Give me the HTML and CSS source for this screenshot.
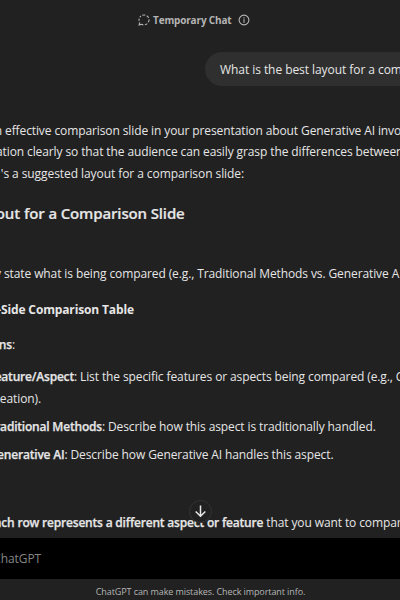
FILE: index.html
```
<!DOCTYPE html>
<html lang="en">
<head>
<meta charset="utf-8">
<title>Temporary Chat</title>
<link rel="stylesheet" href="styles.css">
</head>
<body>
<div class="app">
  <header class="topbar">
    <svg class="dashed" viewBox="0 0 12 12"><path d="M4.3 1.3A5 5 0 0 1 7.2 1.1M8.7 1.7A5 5 0 0 1 10.6 3.9M11 5.4A5 5 0 0 1 10.4 8.3M9.3 9.6A5 5 0 0 1 6.9 10.8M5.3 10.9Q4.3 10.7 3.6 10.3L1.1 10.9L1.7 8.3M1.1 6.9A5 5 0 0 1 1.2 4.6M1.8 3.3A5 5 0 0 1 3 2"/></svg>
    <span class="title">Temporary Chat</span>
    <svg class="info" viewBox="0 0 12 12"><circle cx="6" cy="6" r="4.9"/><path d="M6 5.2V8.7M6 3.2V4.4"/></svg>
  </header>
  <main class="thread">
    <div class="bubble">What is the best layout for a com</div>
    <div class="answer">
      <p class="line first"><span class="cut w5">n</span><span>effective comparison slide in your presentation about Generative AI invo</span></p>
      <p class="line"><span class="cut w27">ation</span><span>clearly so that the audience can easily grasp the differences between</span></p>
      <p class="line"><span class="cut w12">'s</span><span class="loose">a suggested layout for a comparison slide:</span></p>
      <h3 class="line"><span class="cut w24">out</span><span>for a Comparison Slide</span></h3>
      <p class="line state"><span class="cut w4">y</span><span>state what is being compared (e.g., Traditional Methods vs. Generative A</span></p>
      <h4 class="line"><span class="cut w1 tight">-</span><span>Side Comparison Table</span></h4>
      <p class="line columns"><span class="cut w15 tight"><span><b>ns</b>:</span></span></p>
      <ul>
        <li class="line"><span class="cut w80"><span><b>eature/Aspect</b>:</span></span><span>List the specific features or aspects being compared (e.g., C</span></li>
        <li class="line"><span class="cut w41 tight">eation).</span></li>
        <li class="line gap"><span class="cut w108"><span><b>raditional Methods</b>:</span></span><span>Describe how this aspect is traditionally handled.</span></li>
        <li class="line gap"><span class="cut w71"><span><b>enerative AI</b>:</span></span><span>Describe how Generative AI handles this aspect.</span></li>
      </ul>
      <p class="line rows"><span class="cut w17"><b>ach</b></span><span><b>row represents a different aspect or feature</b> that you want to compar</span></p>
    </div>
    <div class="scroll"><svg viewBox="0 0 24 24"><path d="M12 5V17.3M6.5 12L12 17.5L17.5 12"/></svg></div>
  </main>
  <div class="composer"><span class="cut w41 tight">ChatGPT</span></div>
  <footer>ChatGPT can make mistakes. Check important info.</footer>
</div>
</body>
</html>
```
FILE: styles.css
```
* { box-sizing: border-box; margin: 0; padding: 0; }
body { background: #212121; color: #e6e6e6; font: 12px/22px "Open Sans", "Noto Sans", sans-serif; letter-spacing: -0.105px; overflow: hidden; }
.app { width: 400px; height: 600px; overflow: hidden; display: flex; flex-direction: column; }
.topbar { height: 40px; display: flex; align-items: center; padding-left: 138px; color: #b4b4b4; flex: none; }
.topbar svg { width: 12px; height: 12px; fill: none; stroke: #b4b4b4; stroke-width: 1.1; }
.title { font-size: 10px; font-weight: 700; letter-spacing: -0.16px; margin: 0 6px 0 3px; width: 79px; white-space: nowrap; }
.thread { height: 498px; flex: none; position: relative; overflow: hidden; padding-top: 12px; }
.bubble { margin-left: 205px; width: 300px; height: 34px; border-radius: 17px; background: #2f2f2f; padding: 7px 15px; white-space: nowrap; letter-spacing: -0.06px; }
.answer { padding-top: 34px; }
.line { display: flex; white-space: nowrap; height: 22px; font-size: 12px; font-weight: 400; }
.first { height: 21px; }
.loose { letter-spacing: -0.07px; }
.cut { display: flex; justify-content: flex-end; flex: none; padding-right: 3px; }
.tight { padding-right: 0; }
b { font-weight: 600; letter-spacing: -0.2px; -webkit-text-stroke: 0.25px currentColor; }
.w1 { width: 1px; }
.w4 { width: 4px; }
.w5 { width: 5px; }
.w12 { width: 12px; }
.w15 { width: 15px; }
.w17 { width: 17.5px; }
.w24 { width: 24px; }
.w27 { width: 27px; }
.w41 { width: 41px; }
.w71 { width: 70.5px; }
.w80 { width: 80px; }
.w108 { width: 108px; }
h3.line { font-size: 15px; font-weight: 600; letter-spacing: -0.14px; margin-top: 17px; -webkit-text-stroke: 0.2px currentColor; }
h3 .cut { padding-right: 4px; }
.state { margin-top: 39px; }
h4.line { font-weight: 700; letter-spacing: -0.14px; margin-top: 14px; }
.columns { margin-top: 13px; }
ul { list-style: none; margin-top: 10px; }
.gap { margin-top: 6px; }
.rows { margin-top: 46px; }
.scroll { position: absolute; left: 189px; top: 460px; width: 23px; height: 23px; border-radius: 50%; border: 1px solid #343434; background: #212121; display: flex; }
.scroll svg { width: 21px; height: 21px; fill: none; stroke: #e8e8e8; stroke-width: 1.7; }
.composer { height: 41px; background: #000; color: #858585; padding-top: 10px; flex: none; }
footer { height: 21px; text-align: center; font-size: 9px; line-height: 26px; letter-spacing: -0.09px; color: #b4b4b4; padding-left: 1px; }
```
